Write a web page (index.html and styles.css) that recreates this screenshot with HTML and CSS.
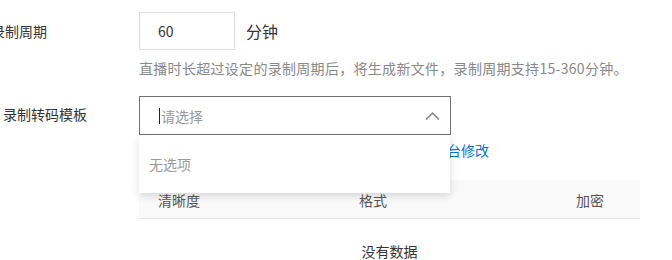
FILE: index.html
```html
<!DOCTYPE html>
<html lang="zh-CN">
<head>
<meta charset="utf-8">
<link rel="stylesheet" href="styles.css">
</head>
<body>
<div class="page">
  <div class="row">
    <div class="label label-cut">录制周期</div>
    <div class="control">
      <div class="inline">
        <div class="num-input">60</div>
        <span class="unit">分钟</span>
      </div>
      <div class="hint">直播时长超过设定的录制周期后，将生成新文件，录制周期支持15-360分钟。</div>
    </div>
  </div>
  <div class="row row-select">
    <div class="label label-tpl">录制转码模板</div>
    <div class="control">
      <div class="select-wrap">
        <div class="select">
          <span class="caret"></span><span class="placeholder">请选择</span>
          <svg class="chevron" width="15" height="8" viewBox="0 0 15 8"><polyline points="1,7.5 7.5,1.2 14,7.5" fill="none" stroke="#8a8a8a" stroke-width="1.6"/></svg>
        </div>
        <div class="dropdown"><span class="empty-opt">无选项</span></div>
      </div>
      <div class="note">暂无可用的录制转码模板，如需添加请您<a class="link">前往控制台修改</a></div>
      <div class="table">
        <div class="thead">
          <div class="th">清晰度</div>
          <div class="th">格式</div>
          <div class="th">加密</div>
        </div>
        <div class="tbody">没有数据</div>
      </div>
    </div>
  </div>
</div>
</body>
</html>
```
FILE: styles.css
```css
html, body {
  margin: 0;
  padding: 0;
  background: #fff;
  width: 672px;
  height: 260px;
  overflow: hidden;
}
body {
  font-family: "Noto Sans CJK SC", "Noto Sans", sans-serif;
  font-size: 14px;
  color: #333;
}
.page {
  padding-top: 12px;
}
.row {
  display: grid;
  grid-template-columns: 139px 501px;
}
.label {
  height: 38px;
  line-height: 38px;
  font-size: 14px;
  color: #333;
  white-space: nowrap;
}
.label-cut {
  margin-left: -9px;
}
.label-tpl {
  margin-left: 3px;
  height: 39px;
  line-height: 37px;
}
.inline {
  display: flex;
  align-items: center;
}
.num-input {
  box-sizing: border-box;
  width: 96px;
  height: 38px;
  border: 1px solid #dedede;
  padding-left: 18px;
  line-height: 36px;
  font-size: 14px;
  color: #333;
}
.unit {
  margin-left: 11px;
  font-size: 16px;
  color: #333;
}
.hint {
  margin-top: 8px;
  line-height: 20px;
  font-size: 14px;
  letter-spacing: 0.3px;
  color: #888;
  white-space: nowrap;
}
.row-select {
  margin-top: 18px;
}
.select-wrap {
  position: relative;
  width: 312px;
}
.select {
  box-sizing: border-box;
  height: 39px;
  border: 1px solid #727272;
  display: flex;
  align-items: center;
  padding-left: 19px;
  position: relative;
}
.caret {
  width: 1px;
  height: 16px;
  background: #222;
  margin-right: 1px;
}
.placeholder {
  color: #999;
  font-size: 14px;
}
.chevron {
  position: absolute;
  right: 10px;
  top: 15px;
}
.dropdown {
  position: absolute;
  left: 0;
  top: 39px;
  width: 311px;
  height: 58px;
  background: #fff;
  box-shadow: 0 3px 8px rgba(0, 0, 0, 0.14);
  display: flex;
  align-items: center;
  padding-left: 10px;
  box-sizing: border-box;
  z-index: 5;
}
.empty-opt {
  color: #999;
  font-size: 14px;
}
.note {
  margin-top: 5px;
  line-height: 20px;
  color: #666;
  white-space: nowrap;
}
.link {
  color: #0a73d6;
}
.table {
  margin-top: 20px;
  width: 501px;
}
.thead {
  display: grid;
  grid-template-columns: 201px 217px 83px;
  height: 38px;
  background: #f9f9f9;
  border-bottom: 1px solid #e6e6e6;
  align-items: center;
}
.th {
  padding-left: 19px;
  color: #555;
  font-size: 14px;
  padding-top: 2px;
}
.tbody {
  text-align: center;
  padding-top: 22px;
  color: #333;
  font-size: 14px;
}
```
